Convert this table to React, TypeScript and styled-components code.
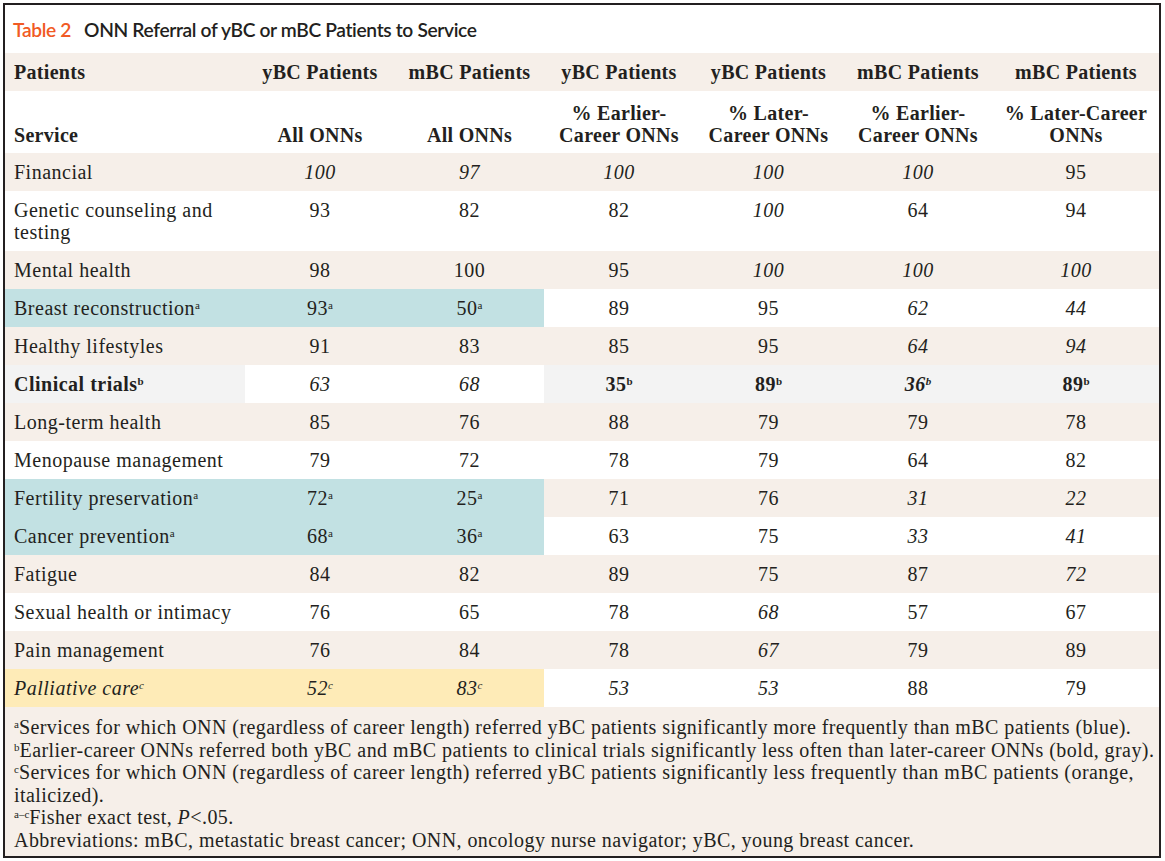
import React from 'react'
import styled, { createGlobalStyle } from 'styled-components'

const GlobalStyle = createGlobalStyle`
  html, body {
    margin: 0;
    padding: 0;
    background: #ffffff;
  }
  body {
    padding: 3px;
    font-family: "Liberation Serif", "DejaVu Serif", serif;
    color: #231f20;
  }
`

const Frame = styled.div`
  width: 1158px;
  height: 855px;
  box-sizing: border-box;
  border: 2px solid #231f20;
  background: #f6efe9;
  display: flex;
  flex-direction: column;
  overflow: hidden;
`

const TitleBar = styled.div`
  flex: 0 0 48px;
  background: #ffffff;
  display: flex;
  align-items: center;
  gap: 13px;
  padding: 0 8px;
  font-family: Lato, "Open Sans", sans-serif;
  font-size: 19.2px;
  font-weight: 600;
  letter-spacing: -0.35px;
`

const TableNum = styled.span`
  color: #f15a24;
`

const TitleText = styled.span`
  color: #231f20;
`

const Table = styled.table`
  flex-shrink: 0;
  width: 100%;
  table-layout: fixed;
  border-collapse: collapse;
  font-size: 20px;
  line-height: 22px;
  letter-spacing: 0.5px;
`

const HeadCell = styled.th<{ $left?: boolean }>`
  font-weight: bold;
  letter-spacing: 0.3px;
  text-align: ${({ $left }) => ($left ? 'left' : 'center')};
  padding: 0 ${({ $left }) => ($left ? '0 0 9px' : '4px')};
`

const HeadRowTop = styled.tr`
  height: 38px;
  background: #f6efe9;

  th {
    vertical-align: middle;
  }
`

const HeadRowBottom = styled.tr`
  height: 62px;
  background: #ffffff;

  th {
    vertical-align: bottom;
    padding-bottom: 7px;
  }
`

const Row = styled.tr<{ $shade: boolean }>`
  background: ${({ $shade }) => ($shade ? '#f6efe9' : '#ffffff')};
`

const Cell = styled.td<{ $bg?: string; $italic?: boolean; $bold?: boolean; $label?: boolean }>`
  height: 38px;
  box-sizing: border-box;
  vertical-align: top;
  padding: ${({ $label }) => ($label ? '8px 2px 8px 9px' : '8px 4px')};
  text-align: ${({ $label }) => ($label ? 'left' : 'center')};
  background: ${({ $bg }) => $bg || 'transparent'};
  font-style: ${({ $italic }) => ($italic ? 'italic' : 'normal')};
  font-weight: ${({ $bold }) => ($bold ? 'bold' : 'normal')};
`

const Sup = styled.sup`
  font-size: 11px;
  line-height: 0;
  vertical-align: 6px;
  letter-spacing: 0;
`

const Notes = styled.div`
  flex: 1;
  padding: 9px 0 0 9px;
  font-size: 20px;
  line-height: 22.6px;
  letter-spacing: 0.44px;
`

const NoteLine = styled.div``

const BLUE = '#c2e1e3'
const YELLOW = '#feebb7'
const GRAY = '#f3f3f3'

type Val = { v: string; i?: boolean; b?: boolean; sup?: string; bg?: string }
type RowData = { label: string; sup?: string; labelBg?: string; labelItalic?: boolean; labelBold?: boolean; shade: boolean; vals: Val[] }

const n = (v: string, i = false): Val => ({ v, i })

const rows: RowData[] = [
  { label: 'Financial', shade: true, vals: [n('100', true), n('97', true), n('100', true), n('100', true), n('100', true), n('95')] },
  { label: 'Genetic counseling and testing', shade: false, vals: [n('93'), n('82'), n('82'), n('100', true), n('64'), n('94')] },
  { label: 'Mental health', shade: true, vals: [n('98'), n('100'), n('95'), n('100', true), n('100', true), n('100', true)] },
  {
    label: 'Breast reconstruction', sup: 'a', labelBg: BLUE, shade: false,
    vals: [{ v: '93', sup: 'a', bg: BLUE }, { v: '50', sup: 'a', bg: BLUE }, n('89'), n('95'), n('62', true), n('44', true)],
  },
  { label: 'Healthy lifestyles', shade: true, vals: [n('91'), n('83'), n('85'), n('95'), n('64', true), n('94', true)] },
  {
    label: 'Clinical trials', sup: 'b', labelBg: GRAY, labelBold: true, shade: false,
    vals: [
      n('63', true), n('68', true),
      { v: '35', sup: 'b', b: true, bg: GRAY },
      { v: '89', sup: 'b', b: true, bg: GRAY },
      { v: '36', sup: 'b', b: true, i: true, bg: GRAY },
      { v: '89', sup: 'b', b: true, bg: GRAY },
    ],
  },
  { label: 'Long-term health', shade: true, vals: [n('85'), n('76'), n('88'), n('79'), n('79'), n('78')] },
  { label: 'Menopause management', shade: false, vals: [n('79'), n('72'), n('78'), n('79'), n('64'), n('82')] },
  {
    label: 'Fertility preservation', sup: 'a', labelBg: BLUE, shade: true,
    vals: [{ v: '72', sup: 'a', bg: BLUE }, { v: '25', sup: 'a', bg: BLUE }, n('71'), n('76'), n('31', true), n('22', true)],
  },
  {
    label: 'Cancer prevention', sup: 'a', labelBg: BLUE, shade: false,
    vals: [{ v: '68', sup: 'a', bg: BLUE }, { v: '36', sup: 'a', bg: BLUE }, n('63'), n('75'), n('33', true), n('41', true)],
  },
  { label: 'Fatigue', shade: true, vals: [n('84'), n('82'), n('89'), n('75'), n('87'), n('72', true)] },
  { label: 'Sexual health or intimacy', shade: false, vals: [n('76'), n('65'), n('78'), n('68', true), n('57'), n('67')] },
  { label: 'Pain management', shade: true, vals: [n('76'), n('84'), n('78'), n('67', true), n('79'), n('89')] },
  {
    label: 'Palliative care', sup: 'c', labelBg: YELLOW, labelItalic: true, shade: false,
    vals: [
      { v: '52', sup: 'c', i: true, bg: YELLOW },
      { v: '83', sup: 'c', i: true, bg: YELLOW },
      n('53', true), n('53', true), n('88'), n('79'),
    ],
  },
]

const colWidths = [240, 150, 149, 150, 149, 150, 166]

export default function App() {
  return (
    <>
      <GlobalStyle />
      <Frame>
        <TitleBar>
          <TableNum>Table 2</TableNum>
          <TitleText>ONN Referral of yBC or mBC Patients to Service</TitleText>
        </TitleBar>

        <Table>
          <colgroup>
            {colWidths.map((w, i) => (
              <col key={i} style={{ width: w }} />
            ))}
          </colgroup>
          <thead>
            <HeadRowTop>
              <HeadCell $left>Patients</HeadCell>
              <HeadCell>yBC Patients</HeadCell>
              <HeadCell>mBC Patients</HeadCell>
              <HeadCell>yBC Patients</HeadCell>
              <HeadCell>yBC Patients</HeadCell>
              <HeadCell>mBC Patients</HeadCell>
              <HeadCell>mBC Patients</HeadCell>
            </HeadRowTop>
            <HeadRowBottom>
              <HeadCell $left>Service</HeadCell>
              <HeadCell>All ONNs</HeadCell>
              <HeadCell>All ONNs</HeadCell>
              <HeadCell>% Earlier-<br />Career ONNs</HeadCell>
              <HeadCell>% Later-<br />Career ONNs</HeadCell>
              <HeadCell>% Earlier-<br />Career ONNs</HeadCell>
              <HeadCell>% Later-Career<br />ONNs</HeadCell>
            </HeadRowBottom>
          </thead>
          <tbody>
            {rows.map((r) => (
              <Row key={r.label} $shade={r.shade}>
                <Cell $label $bg={r.labelBg} $italic={r.labelItalic} $bold={r.labelBold}>
                  {r.label === 'Genetic counseling and testing' ? (
                    <>Genetic counseling and<br />testing</>
                  ) : (
                    r.label
                  )}
                  {r.sup && <Sup>{r.sup}</Sup>}
                </Cell>
                {r.vals.map((c, i) => (
                  <Cell key={i} $bg={c.bg} $italic={c.i} $bold={c.b}>
                    {c.v}
                    {c.sup && <Sup>{c.sup}</Sup>}
                  </Cell>
                ))}
              </Row>
            ))}
          </tbody>
        </Table>

        <Notes>
          <NoteLine>
            <Sup>a</Sup>Services for which ONN (regardless of career length) referred yBC patients significantly more frequently than mBC patients (blue).
          </NoteLine>
          <NoteLine>
            <Sup>b</Sup>Earlier-career ONNs referred both yBC and mBC patients to clinical trials significantly less often than later-career ONNs (bold, gray).
          </NoteLine>
          <NoteLine>
            <Sup>c</Sup>Services for which ONN (regardless of career length) referred yBC patients significantly less frequently than mBC patients (orange, italicized).
          </NoteLine>
          <NoteLine>
            <Sup>a–c</Sup>Fisher exact test, <i>P</i>&lt;.05.
          </NoteLine>
          <NoteLine>
            Abbreviations: mBC, metastatic breast cancer; ONN, oncology nurse navigator; yBC, young breast cancer.
          </NoteLine>
        </Notes>
      </Frame>
    </>
  )
}
